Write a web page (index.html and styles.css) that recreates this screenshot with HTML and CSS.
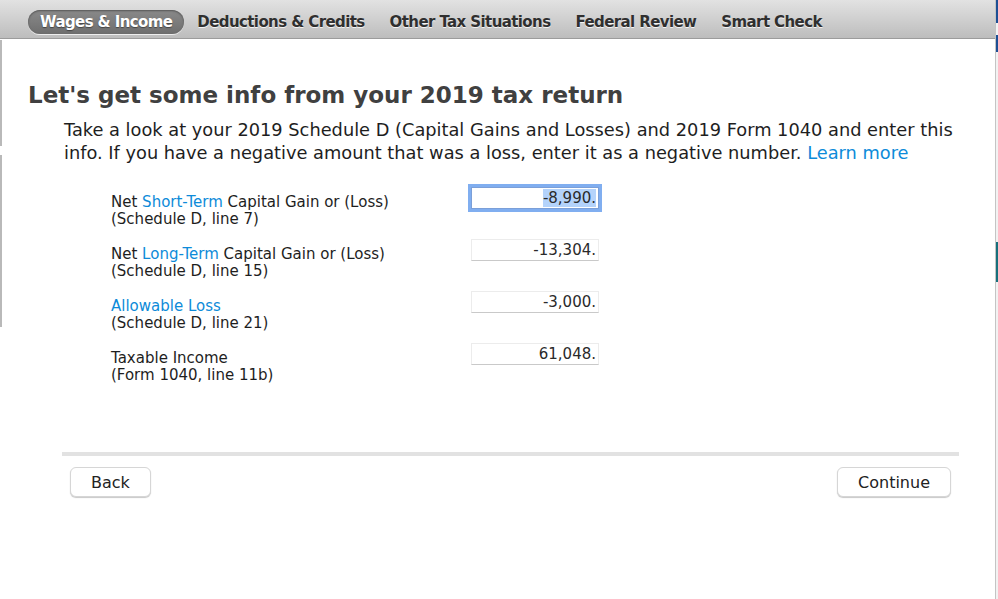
FILE: index.html
```html
<!DOCTYPE html>
<html>
<head>
    <title>Wages &amp; Income - Prior Year Info</title>
    <link rel="stylesheet" href="styles.css">
</head>
<body>
    <div class="screen">
        <div class="window">
            <div class="tabs">
                <span class="tab active">Wages &amp; Income</span>
                <span class="tab">Deductions &amp; Credits</span>
                <span class="tab">Other Tax Situations</span>
                <span class="tab">Federal Review</span>
                <span class="tab">Smart Check</span>
            </div>

            <div class="content">
                <h1>Let's get some info from your 2019 tax return</h1>
                <p class="intro">
                    Take a look at your 2019 Schedule D (Capital Gains and Losses) and 2019 Form 1040 and enter this<br>
                    info. If you have a negative amount that was a loss, enter it as a negative number. <a href="#">Learn more</a>
                </p>

                <div class="fields">
                    <div class="row">
                        <div class="label">Net <a href="#">Short-Term</a> Capital Gain or (Loss)<br>(Schedule D, line 7)</div>
                        <div class="field focused"><span class="sel">-8,990.</span></div>
                    </div>
                    <div class="row">
                        <div class="label">Net <a href="#">Long-Term</a> Capital Gain or (Loss)<br>(Schedule D, line 15)</div>
                        <div class="field">-13,304.</div>
                    </div>
                    <div class="row">
                        <div class="label"><a href="#">Allowable Loss</a><br>(Schedule D, line 21)</div>
                        <div class="field">-3,000.</div>
                    </div>
                    <div class="row">
                        <div class="label">Taxable Income<br>(Form 1040, line 11b)</div>
                        <div class="field">61,048.</div>
                    </div>
                </div>

                <div class="footer">
                    <button>Back</button>
                    <button>Continue</button>
                </div>
            </div>
        </div>
        <div class="edge">
            <div class="edge-blue"></div>
            <div class="edge-gap"></div>
            <div class="edge-blue short"></div>
            <div class="edge-teal"></div>
        </div>
    </div>
</body>
</html>
```

FILE: styles.css
```css
html, body {
    margin: 0;
    height: 100%;
    background: #fff;
}
body {
    font-family: "DejaVu Sans", Verdana, sans-serif;
    color: #1e1e1e;
    overflow: hidden;
}
a {
    color: #0d8bd9;
    text-decoration: none;
}
.screen {
    display: flex;
    height: 599px;
}
.window {
    width: 996px;
    box-sizing: border-box;
    border-right: 1px solid #c4c4c4;
    /* thin grey rule on the left, only partway down */
    background: linear-gradient(#b9b9b9, #b9b9b9) no-repeat 0 40px / 2px 106px,
                linear-gradient(#b9b9b9, #b9b9b9) no-repeat 0 155px / 2px 172px;
}
.tabs {
    height: 33px;
    padding: 5px 0 0 28px;
    background: linear-gradient(#e2e2e2, #bdbdbd);
    border-bottom: 1px solid #9c9c9c;
    display: flex;
    align-items: center;
    gap: 1px;
}
.tab {
    font-size: 15px;
    letter-spacing: -0.6px;
    font-weight: bold;
    color: #2f2f2f;
    padding: 3px 12px 3px;
    text-shadow: 0 1px 0 #f4f4f4;
    border-radius: 12px;
}
.tab.active {
    background: linear-gradient(#8a8a8a, #6e6e6e);
    color: #fff;
    text-shadow: 0 1px 1px #444;
    box-shadow: inset 0 1px 2px #555, 0 1px 0 #eee;
}
.content {
    padding: 0 36px 0 28px;
}
h1 {
    font-size: 23px;
    color: #404040;
    margin: 43px 0 10px;
    font-weight: bold;
}
.intro {
    font-size: 17.8px;
    line-height: 23px;
    margin: 0 0 30px 36px;
    white-space: nowrap;
}
.fields {
    margin-left: 83px;
}
.row {
    display: flex;
    justify-content: space-between;
    width: 488px;
    height: 52px;
    align-items: flex-start;
}
.label {
    font-size: 15px;
    line-height: 17px;
}
.field {
    width: 128px;
    height: 22px;
    box-sizing: border-box;
    border: 1px solid #ececec;
    border-bottom-color: #c9c9c9;
    text-align: right;
    font-size: 15px;
    line-height: 20px;
    padding-right: 2px;
    margin-top: -7px;
    color: #2a2a2a;
}
.field.focused {
    box-shadow: 0 0 0 3px #80aef0;
    border-color: #7b9fd8;
}
.sel {
    background: #b4d3fb;
}
.footer {
    border-top: 4px solid #e2e2e2;
    margin: 50px 0 0 34px;
    padding: 11px 8px 0;
    display: flex;
    justify-content: space-between;
}
button {
    font-family: inherit;
    font-size: 16px;
    color: #222;
    background: #fff;
    border: 1px solid #d6d6d6;
    border-radius: 6px;
    box-shadow: 0 1px 1px #c8c8c8;
    height: 30px;
    padding: 0 20px;
}
.edge {
    width: 2px;
    background: #f2f2f2;
}
.edge-blue {
    height: 23px;
    background: #1d4f94;
}
.edge-gap {
    height: 12px;
}
.edge-blue.short {
    height: 17px;
}
.edge-teal {
    height: 40px;
    margin-top: 190px;
    background: #17707c;
}
```
